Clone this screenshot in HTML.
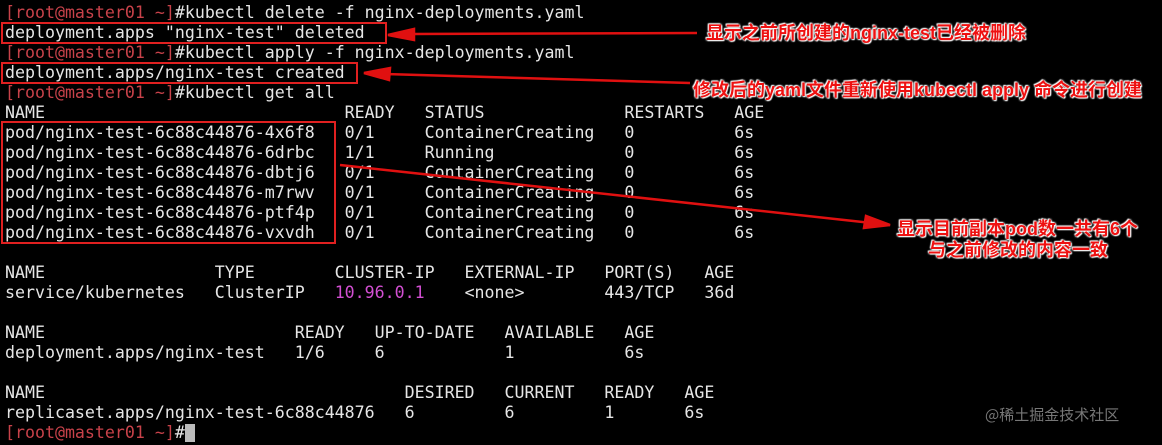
<!DOCTYPE html>
<html><head><meta charset="utf-8"><style>
body{margin:0;background:#000;width:1162px;height:445px;overflow:hidden;position:relative}
pre{margin:0;position:absolute;left:5px;top:3px;font-family:"DejaVu Sans Mono","Liberation Mono",monospace;font-size:16.6px;line-height:20px;color:#e6e6e6}
.p{color:#c8424a}.m{color:#d24fd2}
.box{position:absolute;border:2px solid #e02020;box-sizing:border-box}
.lab{position:absolute;font-family:"Liberation Sans","Noto Sans CJK SC",sans-serif;font-weight:bold;font-size:18px;color:#ee1111;text-shadow:0 0 2px #fff,0 0 2px #fff,0 0 1px #fff,1px 1px 1px #fff,-1px -1px 1px #fff;white-space:nowrap}
.cur{position:absolute;left:185px;top:424px;width:10px;height:18px;background:#bbb}
.wm{position:absolute;left:985px;top:404px;font-family:"Noto Sans CJK SC",sans-serif;font-size:15px;color:#777}
</style></head><body>
<pre><span class="p">[root@master01 ~]</span>#kubectl delete -f nginx-deployments.yaml
deployment.apps "nginx-test" deleted
<span class="p">[root@master01 ~]</span>#kubectl apply -f nginx-deployments.yaml
deployment.apps/nginx-test created
<span class="p">[root@master01 ~]</span>#kubectl get all
NAME                              READY   STATUS              RESTARTS   AGE
pod/nginx-test-6c88c44876-4x6f8   0/1     ContainerCreating   0          6s
pod/nginx-test-6c88c44876-6drbc   1/1     Running             0          6s
pod/nginx-test-6c88c44876-dbtj6   0/1     ContainerCreating   0          6s
pod/nginx-test-6c88c44876-m7rwv   0/1     ContainerCreating   0          6s
pod/nginx-test-6c88c44876-ptf4p   0/1     ContainerCreating   0          6s
pod/nginx-test-6c88c44876-vxvdh   0/1     ContainerCreating   0          6s

NAME                 TYPE        CLUSTER-IP   EXTERNAL-IP   PORT(S)   AGE
service/kubernetes   ClusterIP   <span class="m">10.96.0.1</span>    &lt;none&gt;        443/TCP   36d

NAME                         READY   UP-TO-DATE   AVAILABLE   AGE
deployment.apps/nginx-test   1/6     6            1           6s

NAME                                    DESIRED   CURRENT   READY   AGE
replicaset.apps/nginx-test-6c88c44876   6         6         1       6s
<span class="p">[root@master01 ~]</span>#</pre>
<div class="cur"></div>
<div class="box" style="left:1px;top:22px;width:386px;height:22px"></div>
<div class="box" style="left:1px;top:62px;width:357px;height:22px"></div>
<div class="box" style="left:1px;top:121px;width:335px;height:123px"></div>
<svg width="1162" height="445" style="position:absolute;left:0;top:0">
<g stroke="#e01010" stroke-width="2.5" fill="#e01010">
<line x1="410" y1="34" x2="697" y2="33"/><polygon points="388,35 414,29 414,40"/>
<line x1="385" y1="74" x2="690" y2="83"/><polygon points="364,73 390,68 389,80"/>
<line x1="340" y1="165" x2="890" y2="225"/><polygon points="890,225 866,216 864,228"/>
</g></svg>
<div class="lab" style="left:706px;top:19px">显示之前所创建的nginx-test已经被删除</div>
<div class="lab" style="left:693px;top:76px">修改后的yaml文件重新使用kubectl apply 命令进行创建</div>
<div class="lab" style="left:897px;top:215px">显示目前副本pod数一共有6个</div>
<div class="lab" style="left:928px;top:236px">与之前修改的内容一致</div>
<div class="wm">@稀土掘金技术社区</div>
</body></html>
